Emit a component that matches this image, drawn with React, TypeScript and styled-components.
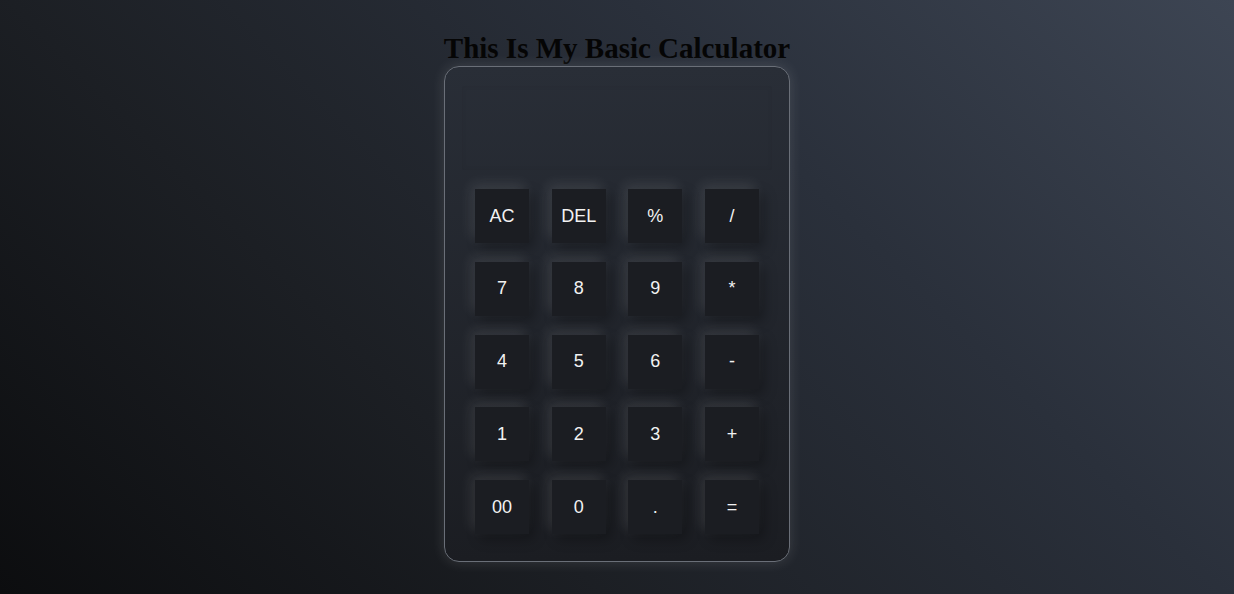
import React from "react";
import styled, { createGlobalStyle } from "styled-components";

const GlobalStyle = createGlobalStyle`
  html, body { margin: 0; padding: 0; }
  body {
    min-height: 100vh;
    background: linear-gradient(45deg, #0c0d0f 0%, #1c1f24 33%, #2a303b 67%, #3d4553 100%);
    background-attachment: fixed;
  }
`;

const Page = styled.div`
  height: 594px;
  display: flex;
  flex-direction: column;
  align-items: center;
  padding-top: 31px;
  box-sizing: border-box;
`;

const Title = styled.h1`
  margin: 0;
  font-family: "Liberation Serif", "Times New Roman", serif;
  font-weight: bold;
  font-size: 29px;
  line-height: 35px;
  color: #050505;
`;

const Calculator = styled.div`
  width: 346px;
  height: 496px;
  box-sizing: border-box;
  border: 1px solid #6a6f78;
  border-radius: 15px;
  background: linear-gradient(to bottom, #292e37, #1b1d22);
  box-shadow: 0 0 14px rgba(255, 255, 255, 0.13);
  display: flex;
  flex-direction: column;
  align-items: center;
  padding: 19px 30px 0;
`;

const Display = styled.div`
  width: 310px;
  height: 84px;
  flex: none;
  box-sizing: border-box;
  border-radius: 2px;
  box-shadow: inset 0 0 5px rgba(0, 0, 0, 0.06), 0 0 2px rgba(255, 255, 255, 0.015);
  margin-bottom: 19px;
`;

const Keys = styled.div`
  width: 100%;
  display: grid;
  grid-template-columns: repeat(4, 54px);
  justify-content: space-between;
  row-gap: 18.75px;
`;

const Key = styled.button`
  width: 54px;
  height: 54px;
  border: none;
  padding: 0;
  background: #1b1d22;
  color: #f2f2f2;
  font-family: "Liberation Sans", Arial, sans-serif;
  font-size: 18px;
  box-shadow: -4px -5px 12px rgba(255, 255, 255, 0.1), 5px 5px 12px rgba(0, 0, 0, 0.3);
  cursor: pointer;
`;

const keys = [
  "AC", "DEL", "%", "/",
  "7", "8", "9", "*",
  "4", "5", "6", "-",
  "1", "2", "3", "+",
  "00", "0", ".", "=",
];

export default function App() {
  return (
    <>
      <GlobalStyle />
      <Page>
        <Title>This Is My Basic Calculator</Title>
        <Calculator>
          <Display />
          <Keys>
            {keys.map((k) => (
              <Key key={k}>{k}</Key>
            ))}
          </Keys>
        </Calculator>
      </Page>
    </>
  );
}
